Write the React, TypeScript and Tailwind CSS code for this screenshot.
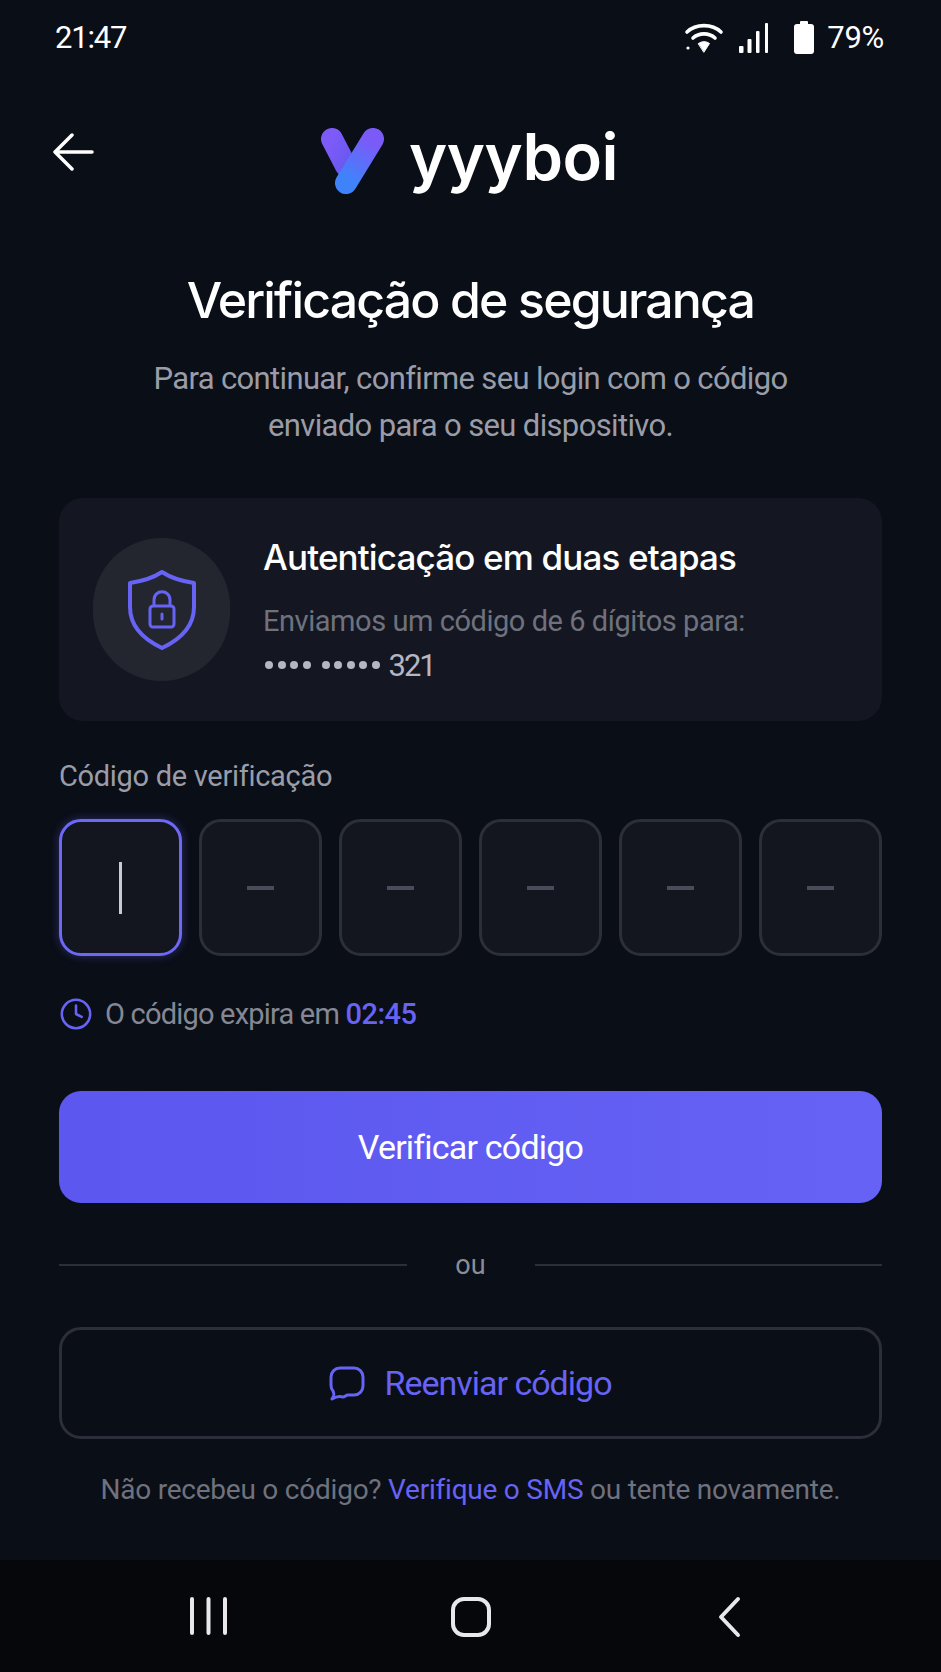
import React from "react";
import { Clock } from "lucide-react";

const sans = "font-['Inter','Noto_Sans',sans-serif]";
const rob = "font-['Roboto','Inter',sans-serif]";

function StatusBar() {
  return (
    <div className="flex items-center justify-between h-[74px] pl-[55px] pr-[57px] text-white">
      <span className={`${rob} text-[31px] leading-none tracking-[-1.200px]`}>21:47</span>
      <div className="flex items-center ml-[-3px]">
        <svg width="40" height="32" viewBox="0 0 40 32" fill="none" stroke="white" strokeLinecap="round">
          <path d="M3 11C12 2.500 28 2.500 37 11" strokeWidth="3.600" />
          <path d="M9 17C15 11.500 25 11.500 31 17" strokeWidth="3.600" />
          <path d="M14.500 22.500C18 20 22 20 25.500 22.500L20 31Z" fill="white" strokeWidth="1" />
          <circle cx="4" cy="27" r="1.600" fill="white" stroke="none" />
        </svg>
        <svg className="ml-[15px]" width="31" height="31" viewBox="0 0 31 31" fill="white">
          <rect x="0" y="24" width="4.500" height="7" rx="1" />
          <rect x="8.500" y="17" width="4" height="14" rx="1" />
          <rect x="17" y="9" width="3.500" height="22" rx="1" />
          <rect x="26" y="1" width="3" height="30" rx="1" />
        </svg>
        <svg className="ml-[23px]" width="22" height="33" viewBox="0 0 22 33" fill="white">
          <rect x="7" y="0" width="8" height="4" rx="1" />
          <rect x="1" y="3" width="20" height="30" rx="3" />
        </svg>
        <span className={`${rob} ml-[12px] text-[31px] leading-none tracking-[-0.300px]`}>79%</span>
      </div>
    </div>
  );
}

function Header() {
  return (
    <div className="relative flex items-center justify-center h-[120px] mt-[20px]">
      <svg className="absolute left-[53px] top-[39px]" width="42" height="38" viewBox="0 0 42 38" fill="none" stroke="white" strokeWidth="3.500" strokeLinecap="round" strokeLinejoin="round">
        <path d="M39 19H2M19 2L2 19L19 36" />
      </svg>
      <div className="flex items-center ml-[-2px]">
        <svg className="mt-[13px]" width="64" height="66" viewBox="0 0 64 66">
          <defs>
            <linearGradient id="y-l" x1="0" y1="0" x2="1" y2="1">
              <stop offset="0" stopColor="#7d5bf8" />
              <stop offset="1" stopColor="#6a58f0" />
            </linearGradient>
            <linearGradient id="y-r" x1="0.700" y1="0" x2="0.300" y2="1">
              <stop offset="0" stopColor="#7a5bf8" />
              <stop offset="1" stopColor="#3f83fb" />
            </linearGradient>
          </defs>
          <path d="M11 11L25 38" stroke="url(#y-l)" strokeWidth="22" strokeLinecap="round" />
          <path d="M52 11L25 55" stroke="url(#y-r)" strokeWidth="22" strokeLinecap="round" />
        </svg>
        <span className={`${sans} ml-[24px] mt-[4px] text-[65px] leading-none font-semibold tracking-[-0.5px] text-white`}>yyyboi</span>
      </div>
    </div>
  );
}

function CodeBox({ active }: { active?: boolean }) {
  if (active) {
    return (
      <div className="flex items-center justify-center h-[137px] rounded-[22px] border-[3px] border-[#6d68f5] bg-[#13161f] shadow-[0_0_10px_rgba(109,104,245,0.35)]">
        <div className="w-[3px] h-[52px] bg-[#c9cad3]" />
      </div>
    );
  }
  return (
    <div className="flex items-center justify-center h-[137px] rounded-[22px] border-[3px] border-[#2c2f39] bg-[#13161f]">
      <div className="w-[27px] h-[4px] bg-[#4a4d59]" />
    </div>
  );
}

function Dots({ count }: { count: number }) {
  return (
    <span className="flex gap-[4.500px]">
      {Array.from({ length: count }).map((_, i) => (
        <span key={i} className="w-[8px] h-[8px] rounded-full bg-[#b4b6c2]" />
      ))}
    </span>
  );
}

export default function App() {
  return (
    <div className={`${rob} flex flex-col w-[941px] h-[1672px] overflow-hidden bg-[#0a0e17]`}>
      <StatusBar />
      <Header />

      <main className="flex-1 px-[59px]">
        <h1 className={`${sans} mt-[56px] text-center text-[50px] leading-[60px] font-medium tracking-[-1.850px] text-white`}>
          Verificação de segurança
        </h1>
        <p className="mt-[25px] text-center text-[31px] leading-[47px] tracking-[-0.650px] text-[#9a9da8]">
          Para continuar, confirme seu login com o código
          <br />
          enviado para o seu dispositivo.
        </p>

        <section className="flex items-center h-[223px] mt-[49px] pl-[34px] rounded-[24px] bg-[#141722]">
          <div className="flex items-center justify-center shrink-0 w-[137px] h-[143px] rounded-full bg-[#23262f]">
            <svg width="70" height="82" viewBox="0 0 70 82" fill="none" stroke="#6763f5">
              <path d="M35 3C44 9 54 12 67 14V38C67 58 52 71 35 79C18 71 3 58 3 38V14C16 12 26 9 35 3Z" strokeWidth="4" strokeLinejoin="round" />
              <rect x="23" y="37" width="24" height="21" rx="3" strokeWidth="3" />
              <path d="M27 37V31C27 20 43 20 43 31V37" strokeWidth="3" />
              <path d="M35 45V50" strokeWidth="3" strokeLinecap="round" />
            </svg>
          </div>
          <div className="ml-[33px]">
            <h2 className={`${sans} text-[35px] leading-[44px] font-medium tracking-[-0.850px] text-white`}>Autenticação em duas etapas</h2>
            <p className="mt-[24px] text-[29px] leading-[36px] tracking-[-0.450px] text-[#6f727d]">Enviamos um código de 6 dígitos para:</p>
            <div className="mt-[7px] flex items-center h-[38px] pl-[2px]">
              <Dots count={4} />
              <span className="ml-[11px]">
                <Dots count={5} />
              </span>
              <span className="ml-[9px] text-[31px] leading-none tracking-[-2px] text-[#b4b6c2]">321</span>
            </div>
          </div>
        </section>

        <label className="block mt-[37px] text-[29px] leading-[36px] tracking-[-0.300px] text-[#9a9da8]">Código de verificação</label>
        <div className="grid grid-cols-6 gap-[17px] mt-[25px]">
          <CodeBox active />
          <CodeBox />
          <CodeBox />
          <CodeBox />
          <CodeBox />
          <CodeBox />
        </div>

        <div className="flex items-center mt-[40px] h-[36px]">
          <Clock size={34} strokeWidth={1.8} className="text-[#6763f5]" />
          <span className="ml-[12px] text-[29px] leading-none tracking-[-0.800px] text-[#858894]">
            O código expira em <span className="font-medium tracking-[-0.500px] text-[#6763f5]">02:45</span>
          </span>
        </div>

        <button className="block w-full h-[112px] mt-[59px] rounded-[22px] bg-gradient-to-r from-[#5b57ef] to-[#6662f5] text-[34px] tracking-[-0.8px] text-white">
          Verificar código
        </button>

        <div className="flex items-center gap-[30px] mt-[47px] h-[30px]">
          <div className="flex-1 h-[2px] bg-[#2b2f3a]" />
          <span className="text-[27px] leading-none text-[#8a8d98] w-[68px] text-center">ou</span>
          <div className="flex-1 h-[2px] bg-[#2b2f3a]" />
        </div>

        <button className="flex items-center justify-center w-full h-[112px] mt-[47px] rounded-[22px] border-[3px] border-[#2c2f39] text-[34px] tracking-[-1px] text-[#6763f5]">
          <svg width="36" height="36" viewBox="0 0 36 36" fill="none" stroke="#6763f5" strokeWidth="3" strokeLinejoin="round">
            <path d="M11 3H25C30 3 34 7 34 12V21C34 26 30 30 25 30H19C17 30 16 32 14 32C12 32 10 30 3 34C6 30 5 28 4 26C2 24 2 22 2 20V12C2 7 6 3 11 3Z" />
          </svg>
          <span className="ml-[19px]">Reenviar código</span>
        </button>

        <p className="mt-[33px] text-center text-[28px] leading-[36px] tracking-[-0.230px] text-[#6f727d]">
          Não recebeu o código? <span className="text-[#6763f5]">Verifique o SMS</span> ou tente novamente.
        </p>
      </main>

      <nav className="flex items-start h-[112px] bg-[#05070b] pt-[36px] pl-[188px]">
        <svg width="41" height="40" viewBox="0 0 41 40" stroke="#e8e8ea" strokeWidth="4" strokeLinecap="round">
          <path d="M4 3V37M20.500 3V37M37 3V37" />
        </svg>
        <svg className="ml-[221px]" width="42" height="42" viewBox="0 0 42 42" fill="none" stroke="#e8e8ea" strokeWidth="4">
          <rect x="3" y="3" width="36" height="36" rx="11" />
        </svg>
        <svg className="ml-[225px]" width="24" height="42" viewBox="0 0 24 42" fill="none" stroke="#e8e8ea" strokeWidth="4" strokeLinecap="round" strokeLinejoin="round">
          <path d="M21 3L4 21L21 39" />
        </svg>
      </nav>
    </div>
  );
}
